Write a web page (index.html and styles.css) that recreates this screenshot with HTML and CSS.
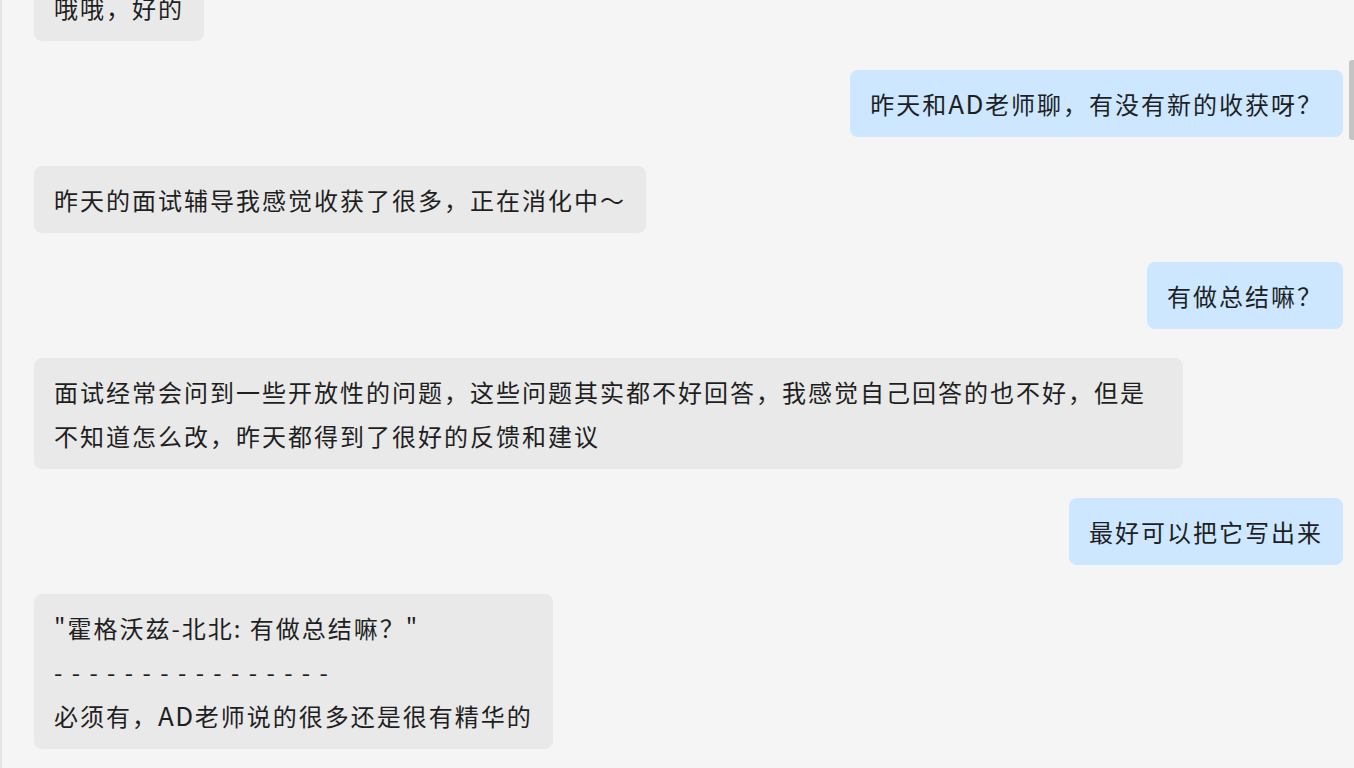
FILE: index.html
```html
<!DOCTYPE html>
<html lang="zh-CN">
<head>
    <meta charset="UTF-8">
    <meta name="viewport" content="width=device-width, initial-scale=1.0">
    <title>聊天记录</title>
    <link rel="stylesheet" href="styles.css">
</head>
<body>
    <div class="chat">
        <div class="row left"><div class="bubble">哦哦，好的</div></div>
        <div class="row right"><div class="bubble">昨天和<span class="latin">AD</span>老师聊，有没有新的收获呀？</div></div>
        <div class="row left"><div class="bubble">昨天的面试辅导我感觉收获了很多，正在消化中～</div></div>
        <div class="row right"><div class="bubble">有做总结嘛？</div></div>
        <div class="row left"><div class="bubble">面试经常会问到一些开放性的问题，这些问题其实都不好回答，我感觉自己回答的也不好，但是不知道怎么改，昨天都得到了很好的反馈和建议</div></div>
        <div class="row right"><div class="bubble">最好可以把它写出来</div></div>
        <div class="row left">
            <div class="bubble">
                <div>"霍格沃兹-北北: 有做总结嘛？"</div>
                <div class="divider">- - - - - - - - - - - - - - - -</div>
                <div>必须有，<span class="latin">AD</span>老师说的很多还是很有精华的</div>
            </div>
        </div>
    </div>

    <div class="scrollbar"></div>
</body>
</html>
```

FILE: styles.css
```css
:root {
    --page-bg: #f5f5f5;
    --left-bg: #e9e9e9;
    --right-bg: #cce7ff;
    --text-color: #1f1f1f;
}

body {
    margin: 0;
    height: 768px;
    overflow: hidden;
    background: var(--page-bg);
    border-left: 2px solid #e4e4e4;
    font-family: "Microsoft YaHei", "Noto Sans CJK SC", sans-serif;
    color: var(--text-color);
}

.chat {
    display: flex;
    flex-direction: column;
    gap: 29px;
    margin-top: -26px;
    padding: 0 11px 0 32px;
}

.row {
    display: flex;
}

.row.right {
    justify-content: flex-end;
}

.bubble {
    box-sizing: border-box;
    max-width: 1149px;
    padding: 12px 20px 11px;
    border-radius: 8px;
    font-size: 24px;
    line-height: 44px;
    letter-spacing: 2px;
}

.left .bubble {
    background: var(--left-bg);
}

.right .bubble {
    background: var(--right-bg);
}

.latin {
    font-size: 26px;
    line-height: 1;
    letter-spacing: 1.5px;
}

.divider {
    letter-spacing: 2px;
}

.scrollbar {
    position: fixed;
    top: 60px;
    right: 0;
    width: 5px;
    height: 80px;
    background: #c4c4c4;
    border-radius: 3px 0 0 3px;
}
```
